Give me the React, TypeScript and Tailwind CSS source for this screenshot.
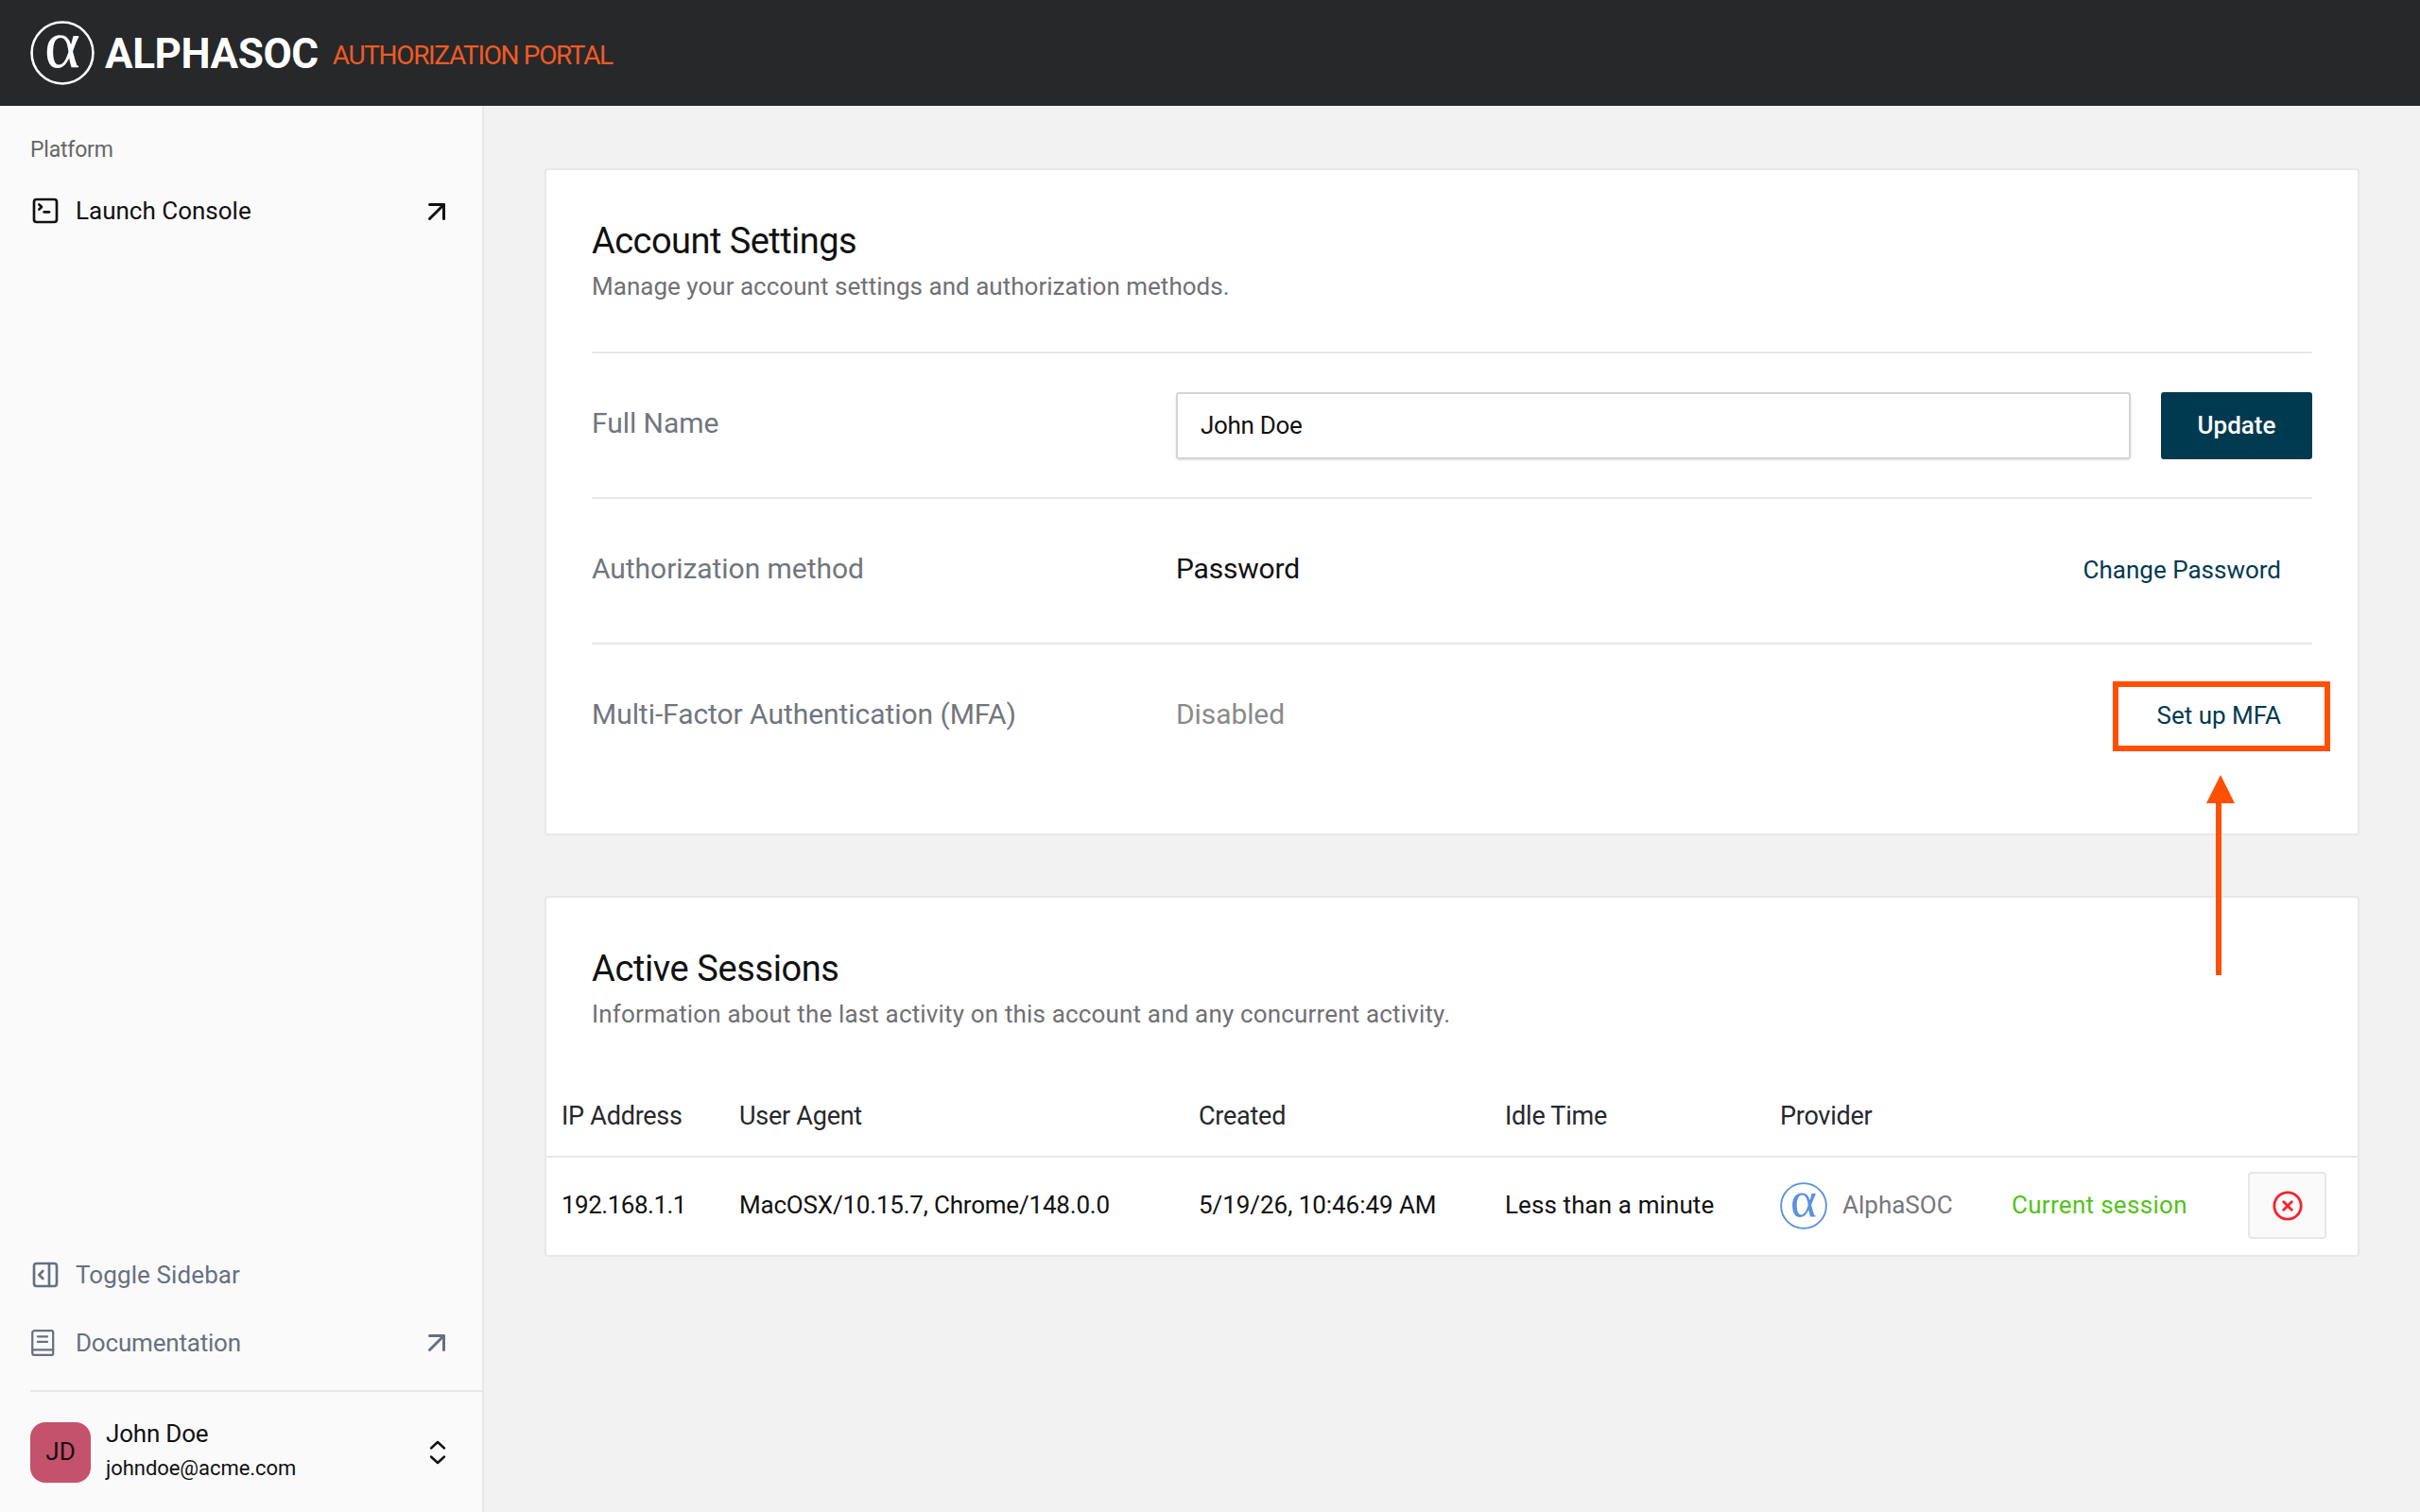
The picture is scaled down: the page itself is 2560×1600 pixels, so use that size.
import { ArrowUpRight, SquareTerminal, PanelRightOpen, CircleX } from "lucide-react";

function AlphaMark({ color, size, stroke }: { color: string; size: number; stroke: number }) {
  return (
    <svg width={size} height={size} viewBox="0 0 66 66" className="shrink-0 overflow-visible">
      <circle cx="33" cy="33" r="31.5" fill="none" stroke={color} strokeWidth={stroke} />
      <text x="33" y="48" textAnchor="middle" fontSize="70" fontFamily="'Liberation Serif', serif" fill={color}>
        α
      </text>
    </svg>
  );
}

function BookIcon() {
  return (
    <svg width="27" height="32" viewBox="0 0 24 28" fill="none" stroke="currentColor" strokeWidth="2" strokeLinecap="round" strokeLinejoin="round">
      <path d="M2 4.5a2 2 0 0 1 2-2h16a1.5 1.5 0 0 1 1.5 1.5v20a1.5 1.5 0 0 1-1.5 1.5H4a2 2 0 0 1-2-2z" />
      <path d="M2 20.5h19.5" />
      <path d="M7 8h9M7 13h9" />
    </svg>
  );
}

function UpDown() {
  return (
    <svg width="18" height="26" viewBox="0 0 18 26" fill="none" stroke="currentColor" strokeWidth="2.4" strokeLinecap="round" strokeLinejoin="round">
      <path d="M2 8.5 9 2l7 6.5" />
      <path d="M2 17.5 9 24l7-6.5" />
    </svg>
  );
}

const rowCls = "flex h-[154px] items-center border-t-2 border-[#e8e8e8]";
const labelCls = "mb-[6px] w-[618px] shrink-0 text-[30px] tracking-[-0.05px] text-[#71767d]";
const th = "pt-[2px] text-[27px] tracking-[-0.25px] text-[#26282c]";

export default function App() {
  return (
    <div className="relative flex h-[1600px] w-[2560px] flex-col overflow-hidden bg-[#f2f2f2] font-['Roboto',sans-serif]">
      <header className="flex h-[112px] shrink-0 items-center bg-[#26282a] pl-[32px]">
        <AlphaMark color="#ffffff" size={68} stroke={2.5} />
        <span className="mt-[2px] ml-[11px] text-[44px] leading-none font-bold tracking-[-0.4px] text-white">ALPHASOC</span>
        <span className="mt-[6px] ml-[15px] text-[28px] leading-none tracking-[-1.35px] text-[#f15a24]">AUTHORIZATION PORTAL</span>
      </header>

      <div className="flex min-h-0 flex-1">
        <aside className="flex w-[512px] shrink-0 flex-col justify-between border-r-2 border-[#e8e8e8] bg-[#fafafa]">
          <div className="px-[32px] pt-[33px]">
            <div className="text-[23px] leading-[28px] tracking-[-0.2px] text-[#666666]">Platform</div>
            <div className="mt-[32px] flex h-[36px] items-center text-[#111111]">
              <SquareTerminal size={32} strokeWidth={2} className="shrink-0" />
              <span className="ml-[16px] flex-1 text-[26px] tracking-[0px]">Launch Console</span>
              <ArrowUpRight size={36} strokeWidth={2} className="-mr-[2px] mt-[2px]" />
            </div>
          </div>
          <div>
            <div className="px-[32px] text-[#67707f]">
              <div className="flex h-[36px] items-center">
                <PanelRightOpen size={32} strokeWidth={2} className="shrink-0" />
                <span className="ml-[16px] text-[26px] tracking-[0.1px]">Toggle Sidebar</span>
              </div>
              <div className="mt-[36px] flex h-[36px] items-center">
                <BookIcon />
                <span className="ml-[21px] flex-1 text-[26px] tracking-[-0.2px]">Documentation</span>
                <ArrowUpRight size={36} strokeWidth={2} className="-mr-[2px]" />
              </div>
            </div>
            <div className="mt-[32px] ml-[32px] flex h-[129px] items-center border-t-2 border-[#e8e8e8] pr-[32px]">
              <div className="flex h-[64px] w-[64px] shrink-0 items-center justify-center rounded-[16px] bg-[#c5526c] text-[26px] text-[#111111]">JD</div>
              <div className="mb-[5px] ml-[16px] flex-1">
                <div className="text-[26px] leading-[34px] tracking-[-0.2px] text-[#111111]">John Doe</div>
                <div className="mt-[5px] text-[22px] leading-[30px] tracking-[-0.05px] text-[#111111]">johndoe@acme.com</div>
              </div>
              <span className="mr-[6px] text-[#111111]">
                <UpDown />
              </span>
            </div>
          </div>
        </aside>

        <main className="flex flex-1 flex-col gap-[64px] px-[64px] pt-[66px]">
          <section className="h-[706px] rounded-[4px] border-2 border-[#e8e8e8] bg-white px-[48px] pt-[47px]">
            <h1 className="text-[38px] leading-[56px] tracking-[-0.55px] text-[#111111]">Account Settings</h1>
            <p className="mt-[2px] text-[26px] leading-[36px] tracking-[0.02px] text-[#707074]">Manage your account settings and authorization methods.</p>
            <div className="mt-[51px]">
              <div className={rowCls}>
                <div className={labelCls}>Full Name</div>
                <div className="flex h-[71px] w-[1010px] items-center rounded-[3px] border-2 border-[#d4d4d4] pl-[24px] text-[26px] tracking-[-0.3px] text-[#111111] shadow-sm">John Doe</div>
                <button className="ml-[32px] h-[71px] w-[160px] rounded-[3px] bg-[#003a50] text-[26px] font-medium tracking-[0px] text-white">Update</button>
              </div>
              <div className={rowCls}>
                <div className={labelCls}>Authorization method</div>
                <span className="mb-[5px] flex-1 text-[30px] tracking-[-0.2px] text-[#111111]">Password</span>
                <span className="mr-[33px] mb-[2px] text-[26px] tracking-[0px] text-[#003a50]">Change Password</span>
              </div>
              <div className={rowCls}>
                <div className={labelCls}>Multi-Factor Authentication (MFA)</div>
                <span className="mb-[6px] flex-1 text-[30px] tracking-[-0.1px] text-[#8a8a8a]">Disabled</span>
                <span className="mr-[33px] mb-[2px] text-[26px] tracking-[0px] text-[#003a50]">Set up MFA</span>
              </div>
            </div>
          </section>

          <section className="h-[382px] rounded-[4px] border-2 border-[#e8e8e8] bg-white pt-[47px]">
            <div className="px-[48px]">
              <h2 className="text-[38px] leading-[56px] tracking-[-0.4px] text-[#111111]">Active Sessions</h2>
              <p className="mt-[2px] text-[26px] leading-[36px] tracking-[0.16px] text-[#707074]">Information about the last activity on this account and any concurrent activity.</p>
            </div>
            <div className="mt-[47px] grid h-[87px] grid-cols-[188px_486px_324px_291px_1fr] items-center border-b-2 border-[#e8e8e8] pl-[16px]">
              <span className={th}>IP Address</span>
              <span className={th}>User Agent</span>
              <span className={th}>Created</span>
              <span className={th}>Idle Time</span>
              <span className={th}>Provider</span>
            </div>
            <div className="grid h-[104px] grid-cols-[188px_486px_324px_291px_245px_250px_1fr] items-center pb-[3px] pl-[16px]">
              <span className="text-[26px] tracking-[-0.5px] text-[#111111]">192.168.1.1</span>
              <span className="text-[26px] tracking-[-0.2px] text-[#111111]">MacOSX/10.15.7, Chrome/148.0.0</span>
              <span className="text-[26px] tracking-[-0.05px] text-[#111111]">5/19/26, 10:46:49 AM</span>
              <span className="text-[26px] tracking-[0.1px] text-[#111111]">Less than a minute</span>
              <span className="flex items-center text-[26px] tracking-[0px] text-[#75777d]">
                <AlphaMark color="#5b93dc" size={50} stroke={2.5} />
                <span className="ml-[16px]">AlphaSOC</span>
              </span>
              <span className="text-[26px] tracking-[0.3px] text-[#52c41a]">Current session</span>
              <button className="flex h-[71px] w-[83px] items-center justify-center rounded-[4px] border-2 border-[#e8e8e8] bg-[#fafafa] text-[#f5222d]">
                <CircleX size={34} strokeWidth={2} />
              </button>
            </div>
          </section>
        </main>
      </div>

      <div className="absolute top-[721px] left-[2235px] h-[74px] w-[230px] border-[6px] border-[#ff4f00]" />
      <svg className="absolute top-[820px] left-[2333px]" width="32" height="213" viewBox="0 0 32 213">
        <path d="M16 0 31 30H17V212h-6V30H1z" fill="#ff4f00" />
      </svg>
    </div>
  );
}
